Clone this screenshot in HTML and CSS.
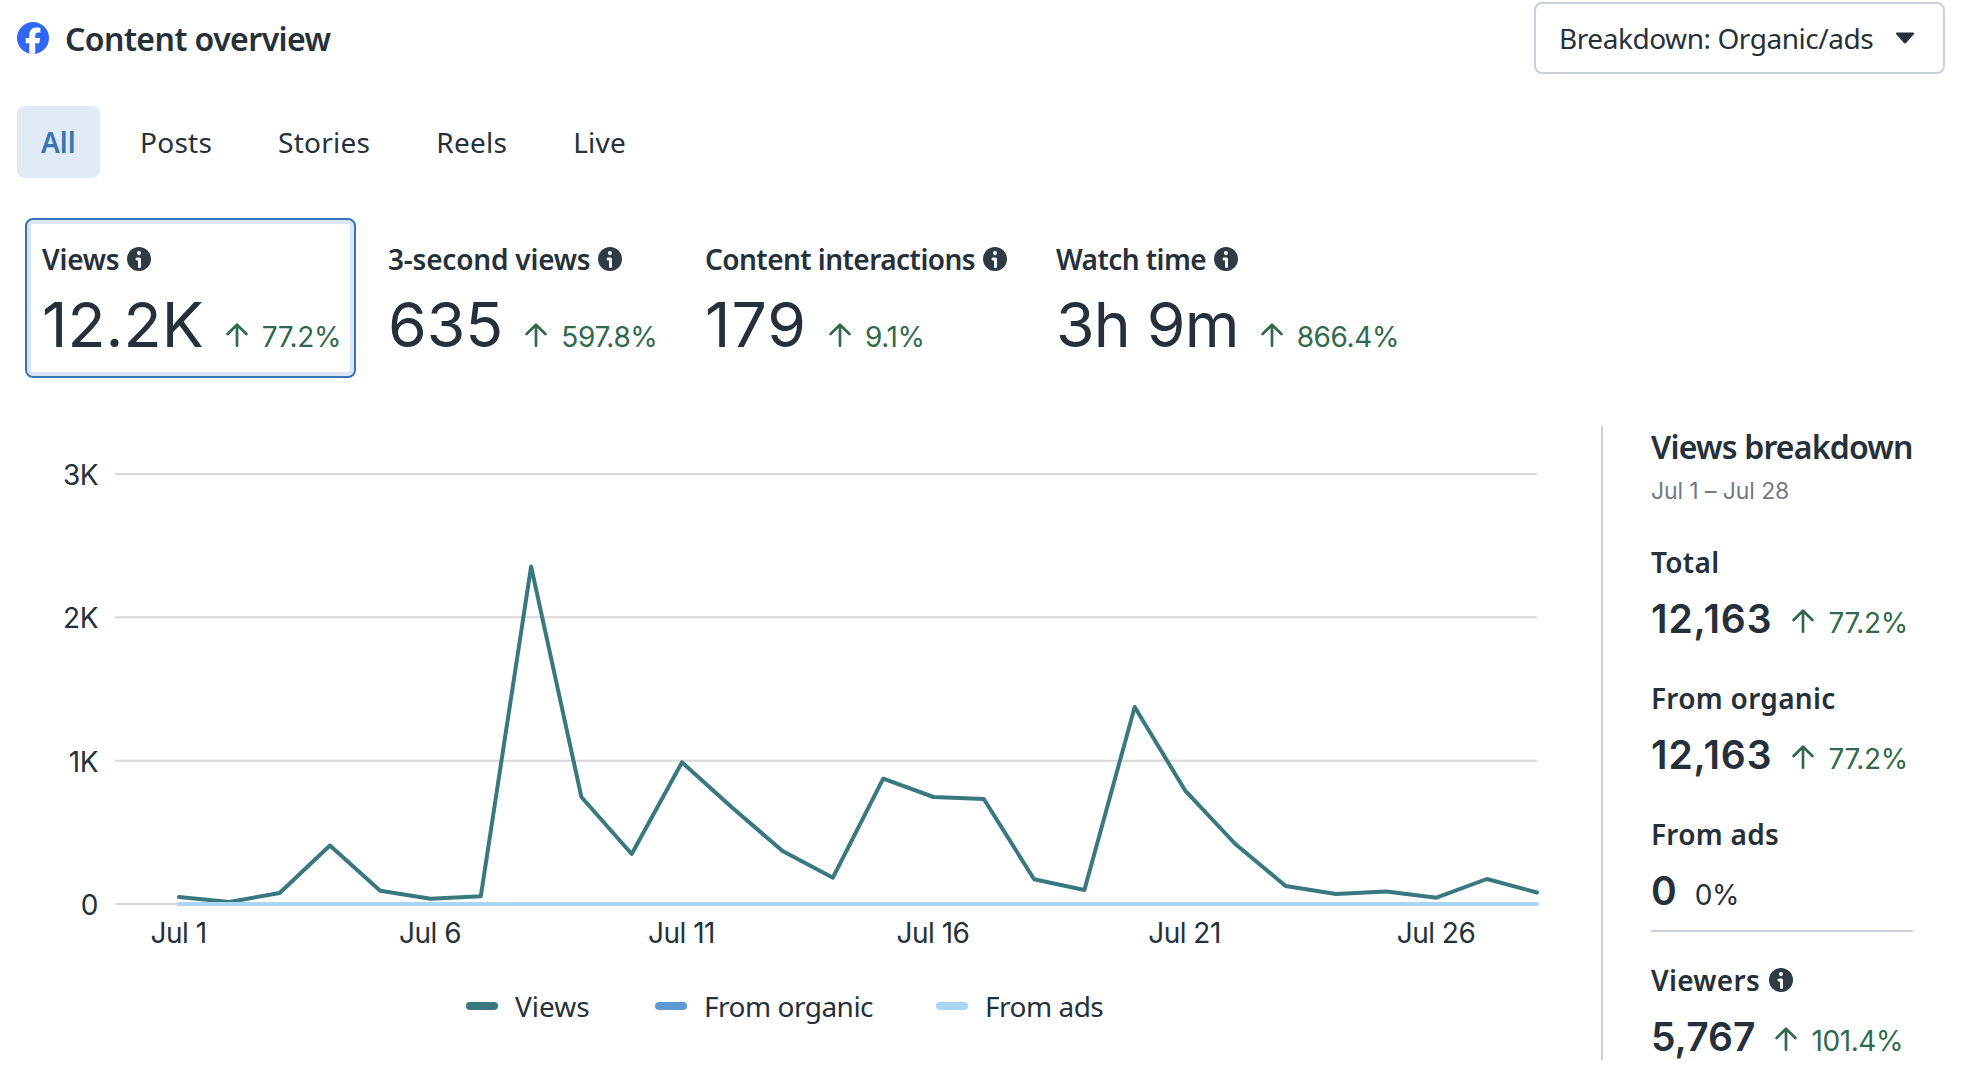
FILE: index.html
```html
<!DOCTYPE html>
<html lang="en">
<head>
  <meta charset="UTF-8" />
  <meta name="viewport" content="width=device-width, initial-scale=1.0" />
  <title>Content overview</title>
  <link rel="stylesheet" href="styles.css">
</head>
<body>
  <!-- shared icons -->
  <svg class="sprite" width="0" height="0">
    <symbol id="info" viewBox="0 0 24 24">
      <circle cx="12" cy="12" r="12" fill="#2f3a44" />
      <circle cx="12" cy="6.1" r="2.1" fill="#fff" />
      <path d="M10 12h2.5v7.5" fill="none" stroke="#fff" stroke-width="3" stroke-linecap="round" stroke-linejoin="round" />
    </symbol>
    <symbol id="up" viewBox="0 0 22 24">
      <path d="M11 22.7V2M1.6 11 11 1.8l9.4 9.2" fill="none" stroke="#31694e" stroke-width="2.7" stroke-linecap="round" stroke-linejoin="round" />
    </symbol>
  </svg>

  <header class="header">
    <svg class="fb-logo" viewBox="0 0 32 32">
      <circle cx="16" cy="16" r="16" fill="#3067f8" />
      <path fill="#fff" d="M12.2 31.8V21.3H8.7V16h3.5v-2.3c0-5.600 2.600-8.200 8-8.200 1.100 0 2.600.2 3.200.4v4.800c-.4 0-1-.1-1.800-.1-2.600 0-3.400 1-3.400 3.500V16h4.900l-.9 5.300h-4v10.500z" />
    </svg>
    <h1>Content overview</h1>
    <button class="dropdown">
      <span>Breakdown: Organic/ads</span>
      <svg width="20" height="12" viewBox="0 0 20 12"><path d="M2 .5h16c1 0 1.4 1.1.7 1.8l-7.4 8.5c-.7.8-1.9.8-2.600 0L1.300 2.300C.6 1.600 1 .5 2 .5z" fill="#25303a" /></svg>
    </button>
  </header>

  <nav class="tabs">
    <a class="tab active">All</a>
    <a class="tab">Posts</a>
    <a class="tab">Stories</a>
    <a class="tab">Reels</a>
    <a class="tab">Live</a>
  </nav>

  <section class="metrics">
    <div class="metric selected">
      <div class="label">Views <svg class="info"><use href="#info" /></svg></div>
      <div class="value">12.2K <span class="trend"><svg class="up"><use href="#up" /></svg>77.2%</span></div>
    </div>
    <div class="metric">
      <div class="label">3-second views <svg class="info"><use href="#info" /></svg></div>
      <div class="value">635 <span class="trend"><svg class="up"><use href="#up" /></svg>597.8%</span></div>
    </div>
    <div class="metric">
      <div class="label tight">Content interactions <svg class="info"><use href="#info" /></svg></div>
      <div class="value"><span class="wide">179</span> <span class="trend"><svg class="up"><use href="#up" /></svg>9.1%</span></div>
    </div>
    <div class="metric">
      <div class="label tight">Watch time <svg class="info"><use href="#info" /></svg></div>
      <div class="value"><span class="narrow">3h 9m</span> <span class="trend"><svg class="up"><use href="#up" /></svg>866.4%</span></div>
    </div>
  </section>

  <main class="main">
    <div class="chart">
      <svg class="plot" width="1601" height="534" viewBox="0 0 1601 534">
        <g class="grid">
          <path d="M115 48H1537M115 191.300H1537M115 334.700H1537M115 478H1537" />
        </g>
        <g class="axis axis-y">
          <text x="98" y="59">3K</text>
          <text x="98" y="202.300">2K</text>
          <text x="98" y="345.700">1K</text>
          <text x="98" y="489">0</text>
        </g>
        <g class="axis axis-x">
          <text x="178.500" y="517.300">Jul 1</text>
          <text x="430" y="517.300">Jul 6</text>
          <text x="681.500" y="517.300">Jul 11</text>
          <text x="933" y="517.300">Jul 16</text>
          <text x="1184.500" y="517.300">Jul 21</text>
          <text x="1436" y="517.300">Jul 26</text>
        </g>
        <polyline class="line views" points="179,471 229.300,476 279.600,467 329.900,419.500 380.200,464.700 430.500,472.700 480.800,470.300 531.100,140.500 581.400,371 631.700,428 682,336.300 732.300,381.700 782.600,425 832.900,451.700 883.200,352.700 933.500,371 983.800,373 1034.100,453.300 1084.400,464 1134.700,281 1185,364.300 1235.300,418 1285.600,460 1335.900,468 1386.200,465.500 1436.500,471.700 1486.800,453 1537,466.500" />
        <path class="line ads" d="M179 478H1537" />
      </svg>
      <div class="legend">
        <span class="legend-item item-views"><i class="swatch"></i>Views</span>
        <span class="legend-item item-organic"><i class="swatch"></i>From organic</span>
        <span class="legend-item item-ads"><i class="swatch"></i>From ads</span>
      </div>
    </div>

    <aside class="breakdown">
      <h2>Views breakdown</h2>
      <p class="dates">Jul 1 – Jul 28</p>

      <div class="stat">
        <div class="label">Total</div>
        <div class="amount"><span class="spread">12,163</span> <span class="trend"><svg class="up"><use href="#up" /></svg>77.2%</span></div>
      </div>
      <div class="stat">
        <div class="label">From organic</div>
        <div class="amount"><span class="spread">12,163</span> <span class="trend"><svg class="up"><use href="#up" /></svg>77.2%</span></div>
      </div>
      <div class="stat">
        <div class="label">From ads</div>
        <div class="amount">0 <span class="trend flat">0%</span></div>
      </div>
      <hr>
      <div class="stat viewers">
        <div class="label">Viewers <svg class="info"><use href="#info" /></svg></div>
        <div class="amount">5,767 <span class="trend"><svg class="up"><use href="#up" /></svg>101.4%</span></div>
      </div>
    </aside>
  </main>
</body>
</html>
```
FILE: styles.css
```css
* { box-sizing: border-box; margin: 0; padding: 0; }
body {
  font-family: "Noto Sans", "Open Sans", sans-serif;
  font-size: 28px;
  color: #25303a;
  background: #fff;
}
svg { display: block; flex: none; }
.sprite { position: absolute; }

.header {
  display: flex;
  align-items: center;
  height: 74px;
  padding: 2px 19px 0 17px;
}
.fb-logo {
  width: 32px;
  height: 32px;
}
.header h1 {
  margin-left: 16px;
  font-size: 32px;
  font-weight: 600;
  letter-spacing: -0.55px;
}
.dropdown {
  display: flex;
  align-items: center;
  justify-content: space-between;
  width: 411px;
  height: 72px;
  margin-left: auto;
  padding: 0 28px 0 23px;
  border: 2px solid #cbd0d8;
  border-radius: 8px;
  background: #fff;
  color: inherit;
  font: 28px/36px "Noto Sans", "Open Sans", sans-serif;
  letter-spacing: -0.45px;
}

.tabs {
  display: flex;
  gap: 18px;
  padding: 32px 17px 0;
  letter-spacing: 0.25px;
}
.tab {
  height: 72px;
  padding: 0 24px;
  border-radius: 8px;
  line-height: 73px;
}
.tab.active {
  width: 83px;
  margin-right: -2px;
  background: #e1ebf6;
  color: #3975b9;
  font-weight: 600;
  letter-spacing: 0;
}

.metrics {
  display: grid;
  grid-template-columns: 331px 302px 336px 400px;
  gap: 15px;
  padding: 40px 25px 0;
}
.metric {
  height: 160px;
  padding: 22px 0 0 15px;
  border: 2px solid transparent;
  border-radius: 8px;
}
.metric.selected {
  border-color: #3874b8;
  box-shadow: inset 0 0 0 4px #dbe5f3;
}
.label {
  display: flex;
  align-items: center;
  gap: 8px;
  font-size: 28px;
  font-weight: 600;
  line-height: 34px;
  letter-spacing: -0.2px;
}
.label.tight { letter-spacing: -0.55px; }
.info {
  width: 24px;
  height: 24px;
}
.value, .amount {
  display: flex;
  align-items: baseline;
  font-family: Inter, "Open Sans", sans-serif;
  white-space: nowrap;
}
.value {
  gap: 22px;
  margin-top: 16px;
  font-size: 62.5px;
  line-height: 64px;
}
.wide { letter-spacing: 1px; }
.narrow { letter-spacing: -0.8px; }
.trend {
  display: flex;
  align-items: baseline;
  gap: 14px;
  color: #31694e;
  font-size: 28px;
  font-weight: 400;
  line-height: 34px;
  letter-spacing: -0.4px;
}
.trend.flat {
  margin-left: -2px;
  color: #25303a;
}
.up {
  width: 22px;
  height: 24px;
}

.main {
  display: flex;
  margin-top: 48px;
}
.chart { width: 1601px; }
.grid path { stroke: #d8d8d8; stroke-width: 2; }
.axis {
  font-family: Inter, "Open Sans", sans-serif;
  font-size: 28px;
  letter-spacing: -0.5px;
  fill: #25303a;
}
.axis-y { text-anchor: end; }
.axis-x { text-anchor: middle; }
.line {
  fill: none;
  stroke-width: 4;
  stroke-linecap: round;
  stroke-linejoin: round;
}
.line.views { stroke: #3a787f; }
.line.ads { stroke: #a9d6f3; }
.legend {
  display: flex;
  height: 92px;
  padding-left: 466px;
  align-items: center;
}
.legend-item {
  display: flex;
  align-items: center;
  gap: 17px;
  letter-spacing: -0.5px;
}
.item-views {
  width: 189px;
  letter-spacing: 0;
}
.item-organic { width: 281px; }
.swatch {
  width: 32px;
  height: 8px;
  border-radius: 4px;
}
.item-views .swatch { background: #3a787f; }
.item-organic .swatch { background: #5f99d5; }
.item-ads .swatch { background: #a9d6f3; }

.breakdown {
  width: 312px;
  height: 634px;
  padding-left: 48px;
  border-left: 2px solid #cbd0d8;
}
.breakdown h2 {
  padding-top: 1px;
  font-size: 32px;
  font-weight: 600;
  line-height: 40px;
  letter-spacing: -0.8px;
  white-space: nowrap;
}
.dates {
  margin: 8px 0 38px;
  color: #737a82;
  font: 23px/32px Inter, "Open Sans", sans-serif;
  letter-spacing: -0.1px;
}
.stat { margin-bottom: 38px; }
.breakdown .label {
  gap: 9px;
  letter-spacing: 0.3px;
}
.amount {
  gap: 20px;
  margin-top: 16px;
  font-size: 39px;
  font-weight: 600;
  line-height: 48px;
}
.spread { letter-spacing: 0.9px; }
.breakdown hr {
  height: 2px;
  margin: -23px 0 31px;
  border: 0;
  background: #cbd0d8;
}
.viewers { margin-bottom: 0; }
```
